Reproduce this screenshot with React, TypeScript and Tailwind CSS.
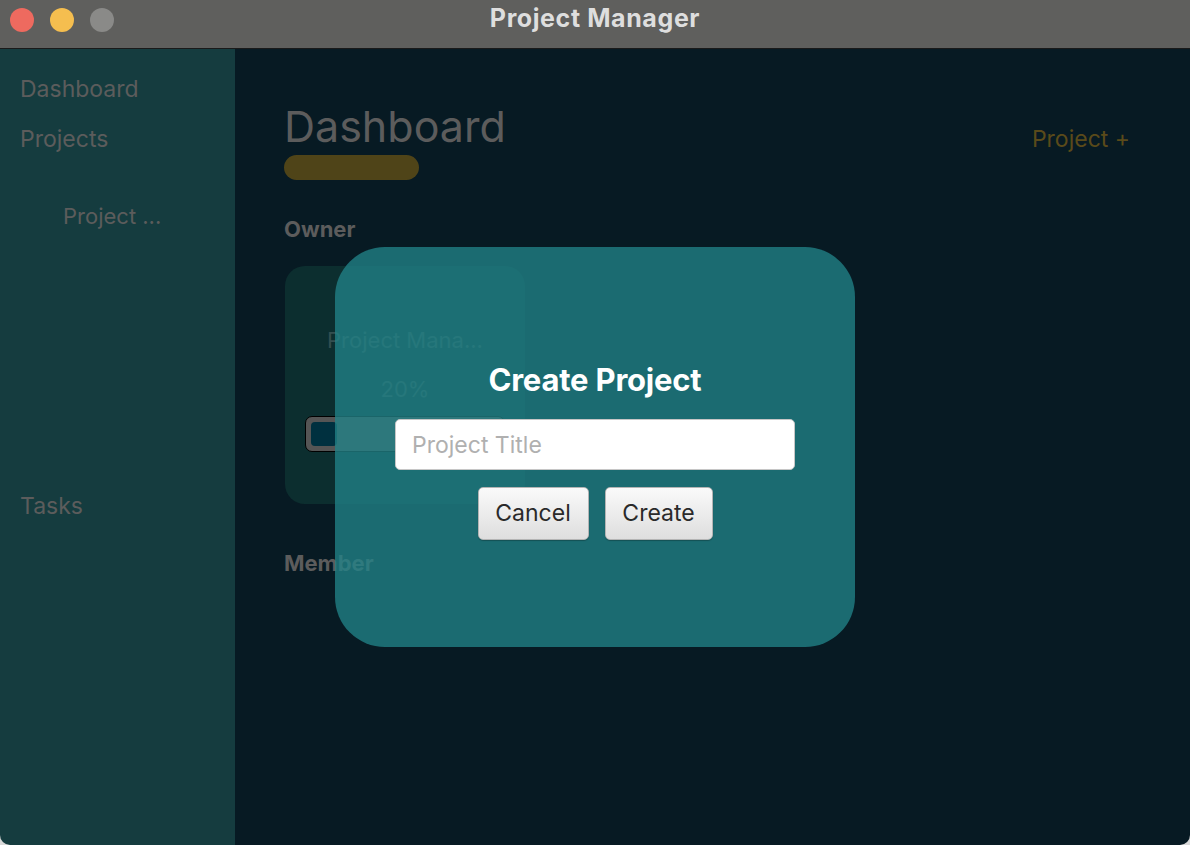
import React from "react";

const FONT = { fontFamily: "Inter, 'Noto Sans', sans-serif" };

export default function App() {
  return (
    <div className="w-[1190px] h-[845px] bg-[#d9d9d9]" style={FONT}>
      <div className="flex flex-col w-full h-full rounded-b-[10px] overflow-hidden">
        {/* title bar */}
        <div className="relative h-[49px] shrink-0 bg-[#5f5f5d] border-b border-[#1a1a1a] flex items-center justify-center">
          <div className="absolute left-[10px] top-[8px] flex gap-4">
            <span className="w-6 h-6 rounded-full bg-[#ee6a5f]" />
            <span className="w-6 h-6 rounded-full bg-[#f5be4f]" />
            <span className="w-6 h-6 rounded-full bg-[#8a8a88]" />
          </div>
          <h1 className="text-[25px] font-bold text-[#dedede] tracking-[0.6px] -mt-[10px]">Project Manager</h1>
        </div>

        <div className="relative flex flex-1 min-h-0">
          {/* sidebar */}
          <aside className="w-[235px] shrink-0 bg-[#153c3f] flex flex-col pt-[25px] pl-5 text-[23px] text-[#5c5c5c]">
            <div className="h-[30px] leading-[30px]">Dashboard</div>
            <div className="h-[30px] leading-[30px] mt-5">Projects</div>
            <div className="h-[326px] pt-[47px] pl-[43px] text-[22px]">
              <div className="h-[30px] leading-[30px]">Project ...</div>
            </div>
            <div className="h-[30px] leading-[30px] mt-[11px]">Tasks</div>
          </aside>

          {/* main */}
          <main className="flex-1 bg-[#071a23] pl-[49px] pr-[60px] pt-[51px]">
            <div className="flex justify-between items-start">
              <div>
                <div className="text-[43px] leading-[52px] text-[#5c5c5c]">Dashboard</div>
                <div className="w-[135px] h-[25px] rounded-full bg-[#4f4418] mt-[3px]" />
              </div>
              <div className="text-[23px] text-[#5a4a1a] mt-[22px]">Project +</div>
            </div>

            <div className="mt-[34px] text-[22px] font-bold text-[#5c5c5c] leading-[30px]">Owner</div>

            <div className="mt-[22px] ml-px w-[240px] h-[238px] rounded-[20px] bg-[#0c2e2f] flex flex-col items-center pt-[59px]">
              <div className="text-[22px] text-[#344f50] leading-[30px]">Project Mana...</div>
              <div className="text-[22px] text-[#344f50] leading-[30px] mt-[19px]">20%</div>
              <div className="mt-[12px] w-[200px] h-[36px] rounded-[7px] border border-black bg-[#555555] p-[5px]">
                <div className="w-[14%] h-full rounded-[4px] bg-[#00303f]" />
              </div>
            </div>

            <div className="mt-[44px] text-[22px] font-bold text-[#5c5c5c] leading-[30px]">Member</div>
          </main>

          {/* dialog */}
          <div className="absolute inset-0 flex items-center justify-center">
            <div className="w-[520px] h-[400px] rounded-[50px] bg-[rgba(34,131,136,0.77)] flex flex-col items-center pt-[113px]">
              <h2 className="text-[31px] font-bold text-white leading-[40px] tracking-[-0.2px]">Create Project</h2>
              <input
                placeholder="Project Title"
                className="mt-[19px] w-[400px] h-[51px] rounded-[5px] bg-white border border-[#c6c6c6] px-4 text-[23px] text-[#333] placeholder:text-[#b0b0b0] outline-none"
                style={FONT}
              />
              <div className="mt-[17px] flex gap-4">
                <button
                  className="w-[111px] h-[53px] rounded-[5px] border border-[#b4b4b4] bg-gradient-to-b from-[#fafafa] to-[#dedede] text-[23px] text-[#2a2a2a] shadow-[0_1px_1px_rgba(0,0,0,0.25)]"
                  style={FONT}
                >
                  Cancel
                </button>
                <button
                  className="w-[108px] h-[53px] rounded-[5px] border border-[#b4b4b4] bg-gradient-to-b from-[#fafafa] to-[#dedede] text-[23px] text-[#2a2a2a] shadow-[0_1px_1px_rgba(0,0,0,0.25)]"
                  style={FONT}
                >
                  Create
                </button>
              </div>
            </div>
          </div>
        </div>
      </div>
    </div>
  );
}
